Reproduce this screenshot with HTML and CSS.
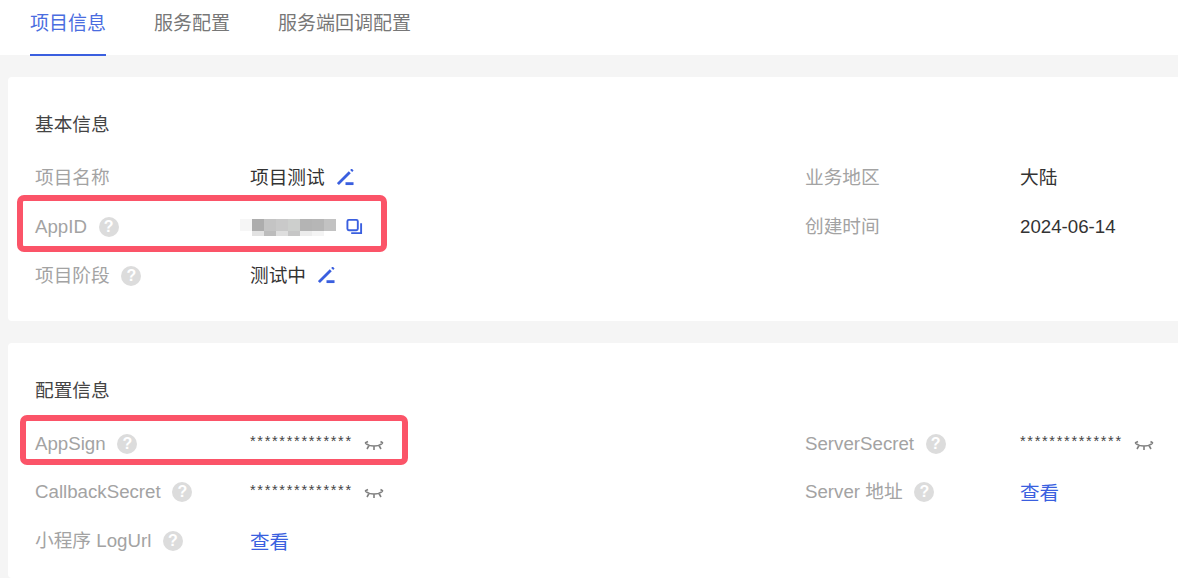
FILE: index.html
```html
<!DOCTYPE html>
<html lang="zh-CN">
<head>
    <meta charset="UTF-8">
    <title>项目信息</title>
    <link rel="stylesheet" href="styles.css">
</head>
<body>
<div class="tabs">
    <div class="tab active">项目信息</div>
    <div class="tab">服务配置</div>
    <div class="tab">服务端回调配置</div>
</div>

<div class="content">
    <div class="card card-basic">
        <div class="card-title">基本信息</div>
        <div class="info-grid">
            <div class="label">项目名称</div>
            <div class="value">项目测试
                <svg class="icon" viewBox="0 0 18 18"><path d="M1 16 L13.500 3.500" class="edit"/><path d="M15 2 L16.500 0.5" class="edit"/><path d="M9 15.500 H17.500" class="edit-base"/></svg>
            </div>
            <div class="label">业务地区</div>
            <div class="value">大陆</div>

            <div class="label">AppID <span class="help">?</span></div>
            <div class="value">
                <svg class="mosaic" viewBox="0 0 96 18">
                    <rect x="0" y="0" width="12" height="12" fill="#f6f6f6"/>
                    <rect x="12" y="0" width="12" height="12" fill="#adadad"/>
                    <rect x="24" y="0" width="12" height="12" fill="#c4c4c4"/>
                    <rect x="36" y="0" width="12" height="12" fill="#c9c9c9"/>
                    <rect x="48" y="0" width="12" height="12" fill="#cdcfcd"/>
                    <rect x="60" y="0" width="12" height="12" fill="#b4b4b4"/>
                    <rect x="72" y="0" width="12" height="12" fill="#b6b6b6"/>
                    <rect x="84" y="0" width="12" height="12" fill="#c2c2c2"/>
                    <rect x="12" y="12" width="12" height="5" fill="#e2e2e2"/>
                    <rect x="24" y="12" width="12" height="5" fill="#bcbcbc"/>
                    <rect x="36" y="12" width="12" height="5" fill="#dedede"/>
                    <rect x="48" y="12" width="12" height="5" fill="#c6c6c6"/>
                    <rect x="60" y="12" width="12" height="5" fill="#ececec"/>
                    <rect x="72" y="12" width="12" height="5" fill="#f4f4f4"/>
                </svg>
                <svg class="icon copy" viewBox="0 0 18 18"><rect x="1.500" y="2" width="11" height="11" rx="1.500" class="copy-front"/><path d="M16 5.500 V16 H5.500" class="copy-back"/></svg>
            </div>
            <div class="label">创建时间</div>
            <div class="value">2024-06-14</div>

            <div class="label">项目阶段 <span class="help">?</span></div>
            <div class="value">测试中
                <svg class="icon" viewBox="0 0 18 18"><path d="M1 16 L13.500 3.500" class="edit"/><path d="M15 2 L16.500 0.5" class="edit"/><path d="M9 15.500 H17.500" class="edit-base"/></svg>
            </div>
        </div>
        <div class="highlight highlight-appid"></div>
    </div>

    <div class="card card-config">
        <div class="card-title">配置信息</div>
        <div class="info-grid">
            <div class="label">AppSign <span class="help">?</span></div>
            <div class="value"><span class="secret">**************</span>
                <svg class="eye" viewBox="0 0 20 12"><path d="M1 3 C6 7 14 7 19 3 M5 5.500 L3 9 M10 6.500 V10 M15 5.500 L17 9 M1 3 L4 1.500 M19 3 L16.500 1.500"/></svg>
            </div>
            <div class="label">ServerSecret <span class="help">?</span></div>
            <div class="value"><span class="secret">**************</span>
                <svg class="eye" viewBox="0 0 20 12"><path d="M1 3 C6 7 14 7 19 3 M5 5.500 L3 9 M10 6.500 V10 M15 5.500 L17 9 M1 3 L4 1.500 M19 3 L16.500 1.500"/></svg>
            </div>

            <div class="label">CallbackSecret <span class="help">?</span></div>
            <div class="value"><span class="secret">**************</span>
                <svg class="eye" viewBox="0 0 20 12"><path d="M1 3 C6 7 14 7 19 3 M5 5.500 L3 9 M10 6.500 V10 M15 5.500 L17 9 M1 3 L4 1.500 M19 3 L16.500 1.500"/></svg>
            </div>
            <div class="label">Server 地址 <span class="help">?</span></div>
            <div class="value"><a class="link">查看</a></div>

            <div class="label">小程序 LogUrl <span class="help">?</span></div>
            <div class="value"><a class="link">查看</a></div>
        </div>
        <div class="highlight highlight-appsign"></div>
    </div>
</div>
</body>
</html>
```

FILE: styles.css
```css
html, body {
    height: 100%;
    overflow: hidden;
}

body {
    margin: 0;
    background: #f5f5f5;
    color: #333;
    font: 18.7px "Liberation Sans", "Noto Sans CJK SC", sans-serif;
}

.tabs {
    display: flex;
    gap: 48px;
    height: 55px;
    padding-left: 30px;
    background: #fff;
}

.tab {
    line-height: 47px;
    font-size: 19px;
    color: #777;
}

.tab.active {
    height: 56px;
    box-sizing: border-box;
    border-bottom: 2px solid #3a5fdf;
    color: #4a6de0;
}

.content {
    padding: 22px 0 0 8px;
}

.card {
    position: relative;
    background: #fff;
    border-radius: 4px 0 0 4px;
    padding: 0 0 0 27px;
}

.card-basic {
    height: 244px;
    margin-bottom: 22px;
}

.card-config {
    height: 235px;
}

.card-title {
    padding-top: 34px;
    line-height: 28px;
    color: #444;
}

.card-basic .card-title {
    margin-bottom: 14px;
}

.card-config .card-title {
    margin-bottom: 14.500px;
}

.info-grid {
    display: grid;
    grid-template-columns: 215px 555px 215px 1fr;
    grid-auto-rows: 49px;
    align-items: center;
}

.card-config .info-grid {
    grid-auto-rows: 48.500px;
}

.label {
    display: flex;
    align-items: center;
    gap: 6.500px;
    height: 28px;
    line-height: 28px;
    color: #a3a3a3;
    white-space: pre;
}

.value {
    display: flex;
    align-items: center;
    gap: 12px;
    height: 28px;
    line-height: 28px;
}

.help {
    display: inline-block;
    width: 20px;
    height: 20px;
    border-radius: 50%;
    background: #dcdcdc;
    color: #fff;
    font-size: 16px;
    font-weight: bold;
    line-height: 20px;
    text-align: center;
}

.icon {
    width: 17px;
    height: 17px;
    fill: none;
}

.edit {
    stroke: #3a5fdf;
    stroke-width: 3;
}

.edit-base {
    stroke: #3a5fdf;
    stroke-width: 3;
}

.copy {
    margin-left: -2px;
}

.copy-front, .copy-back {
    stroke: #3a5fdf;
    stroke-width: 2;
    fill: none;
}

.mosaic {
    width: 96px;
    height: 18px;
    margin-left: -10px;
    margin-top: 2px;
}

.secret {
    font-size: 14.500px;
    letter-spacing: 1.700px;
    color: #444;
    line-height: 20px;
    width: 102px;
    margin-top: -5px;
}

.eye {
    width: 20px;
    height: 12px;
    margin-top: 4px;
    fill: none;
    stroke: #808080;
    stroke-width: 1.600;
}

.link {
    color: #3a5fdf;
    font-size: 19.500px;
    margin-top: 2px;
}

.highlight {
    position: absolute;
    box-sizing: border-box;
    border: 6px solid #fb5468;
    border-radius: 7px;
}

.highlight-appid {
    left: 9px;
    top: 118px;
    width: 370px;
    height: 57px;
}

.highlight-appsign {
    left: 12px;
    top: 72px;
    width: 388px;
    height: 50px;
}
```
